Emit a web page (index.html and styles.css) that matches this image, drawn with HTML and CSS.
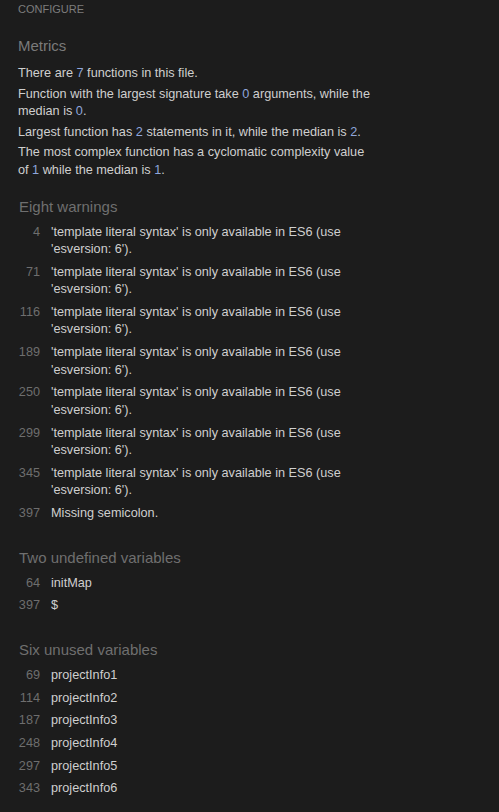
FILE: index.html
```html
<!DOCTYPE html>
<html>
<head>
<meta charset="utf-8">
<link rel="stylesheet" href="styles.css">
</head>
<body>
<div class="panel">
  <div class="configure">CONFIGURE</div>
  <section class="metrics">
    <h2>Metrics</h2>
    <p>There are <span class="num">7</span> functions in this file.</p>
    <p>Function with the largest signature take <span class="num">0</span> arguments, while the median is <span class="num">0</span>.</p>
    <p>Largest function has <span class="num">2</span> statements in it, while the median is <span class="num">2</span>.</p>
    <p>The most complex function has a cyclomatic complexity value of <span class="num">1</span> while the median is <span class="num">1</span>.</p>
  </section>
  <section class="group first">
    <h3>Eight warnings</h3>
    <table class="list">
      <tr><td class="ln">4</td><td>'template literal syntax' is only available in ES6 (use 'esversion: 6').</td></tr>
      <tr><td class="ln">71</td><td>'template literal syntax' is only available in ES6 (use 'esversion: 6').</td></tr>
      <tr><td class="ln">116</td><td>'template literal syntax' is only available in ES6 (use 'esversion: 6').</td></tr>
      <tr><td class="ln">189</td><td>'template literal syntax' is only available in ES6 (use 'esversion: 6').</td></tr>
      <tr><td class="ln">250</td><td>'template literal syntax' is only available in ES6 (use 'esversion: 6').</td></tr>
      <tr><td class="ln">299</td><td>'template literal syntax' is only available in ES6 (use 'esversion: 6').</td></tr>
      <tr><td class="ln">345</td><td>'template literal syntax' is only available in ES6 (use 'esversion: 6').</td></tr>
      <tr><td class="ln">397</td><td>Missing semicolon.</td></tr>
    </table>
  </section>
  <section class="group">
    <h3>Two undefined variables</h3>
    <table class="list">
      <tr><td class="ln">64</td><td>initMap</td></tr>
      <tr><td class="ln">397</td><td>$</td></tr>
    </table>
  </section>
  <section class="group">
    <h3>Six unused variables</h3>
    <table class="list">
      <tr><td class="ln">69</td><td>projectInfo1</td></tr>
      <tr><td class="ln">114</td><td>projectInfo2</td></tr>
      <tr><td class="ln">187</td><td>projectInfo3</td></tr>
      <tr><td class="ln">248</td><td>projectInfo4</td></tr>
      <tr><td class="ln">297</td><td>projectInfo5</td></tr>
      <tr><td class="ln">343</td><td>projectInfo6</td></tr>
    </table>
  </section>
</div>
</body>
</html>
```

FILE: styles.css
```css
html, body {
  margin: 0;
  padding: 0;
  background: #1c1c1c;
}
body {
  font-family: "Liberation Sans", Arial, sans-serif;
  font-size: 12.7px;
  color: #cfcfcf;
  height: 812px;
  overflow: hidden;
}
.panel {
  padding: 2px 18px 0 18px;
  width: 354px;
}
.configure {
  font-size: 11px;
  color: #7d7d7d;
  line-height: 14px;
}
.metrics h2 {
  font-size: 15px;
  font-weight: normal;
  color: #7a7a7a;
  margin: 21px 0 10px 0;
  line-height: 18px;
}
.metrics p {
  margin: 0 0 3px 0;
  line-height: 17.5px;
}
.num {
  color: #8fa6dc;
}
.group h3 {
  font-size: 15px;
  font-weight: normal;
  color: #6f6f6f;
  margin: 24px 0 5px 1px;
  line-height: 18px;
}
.group.first h3 {
  margin-top: 19px;
}
.list {
  border-collapse: collapse;
}
.list td {
  padding: 2.6px 0;
  line-height: 17.5px;
  vertical-align: top;
}
.list td.ln {
  width: 22px;
  text-align: right;
  color: #6e6e6e;
  padding-right: 11px;
}
```
